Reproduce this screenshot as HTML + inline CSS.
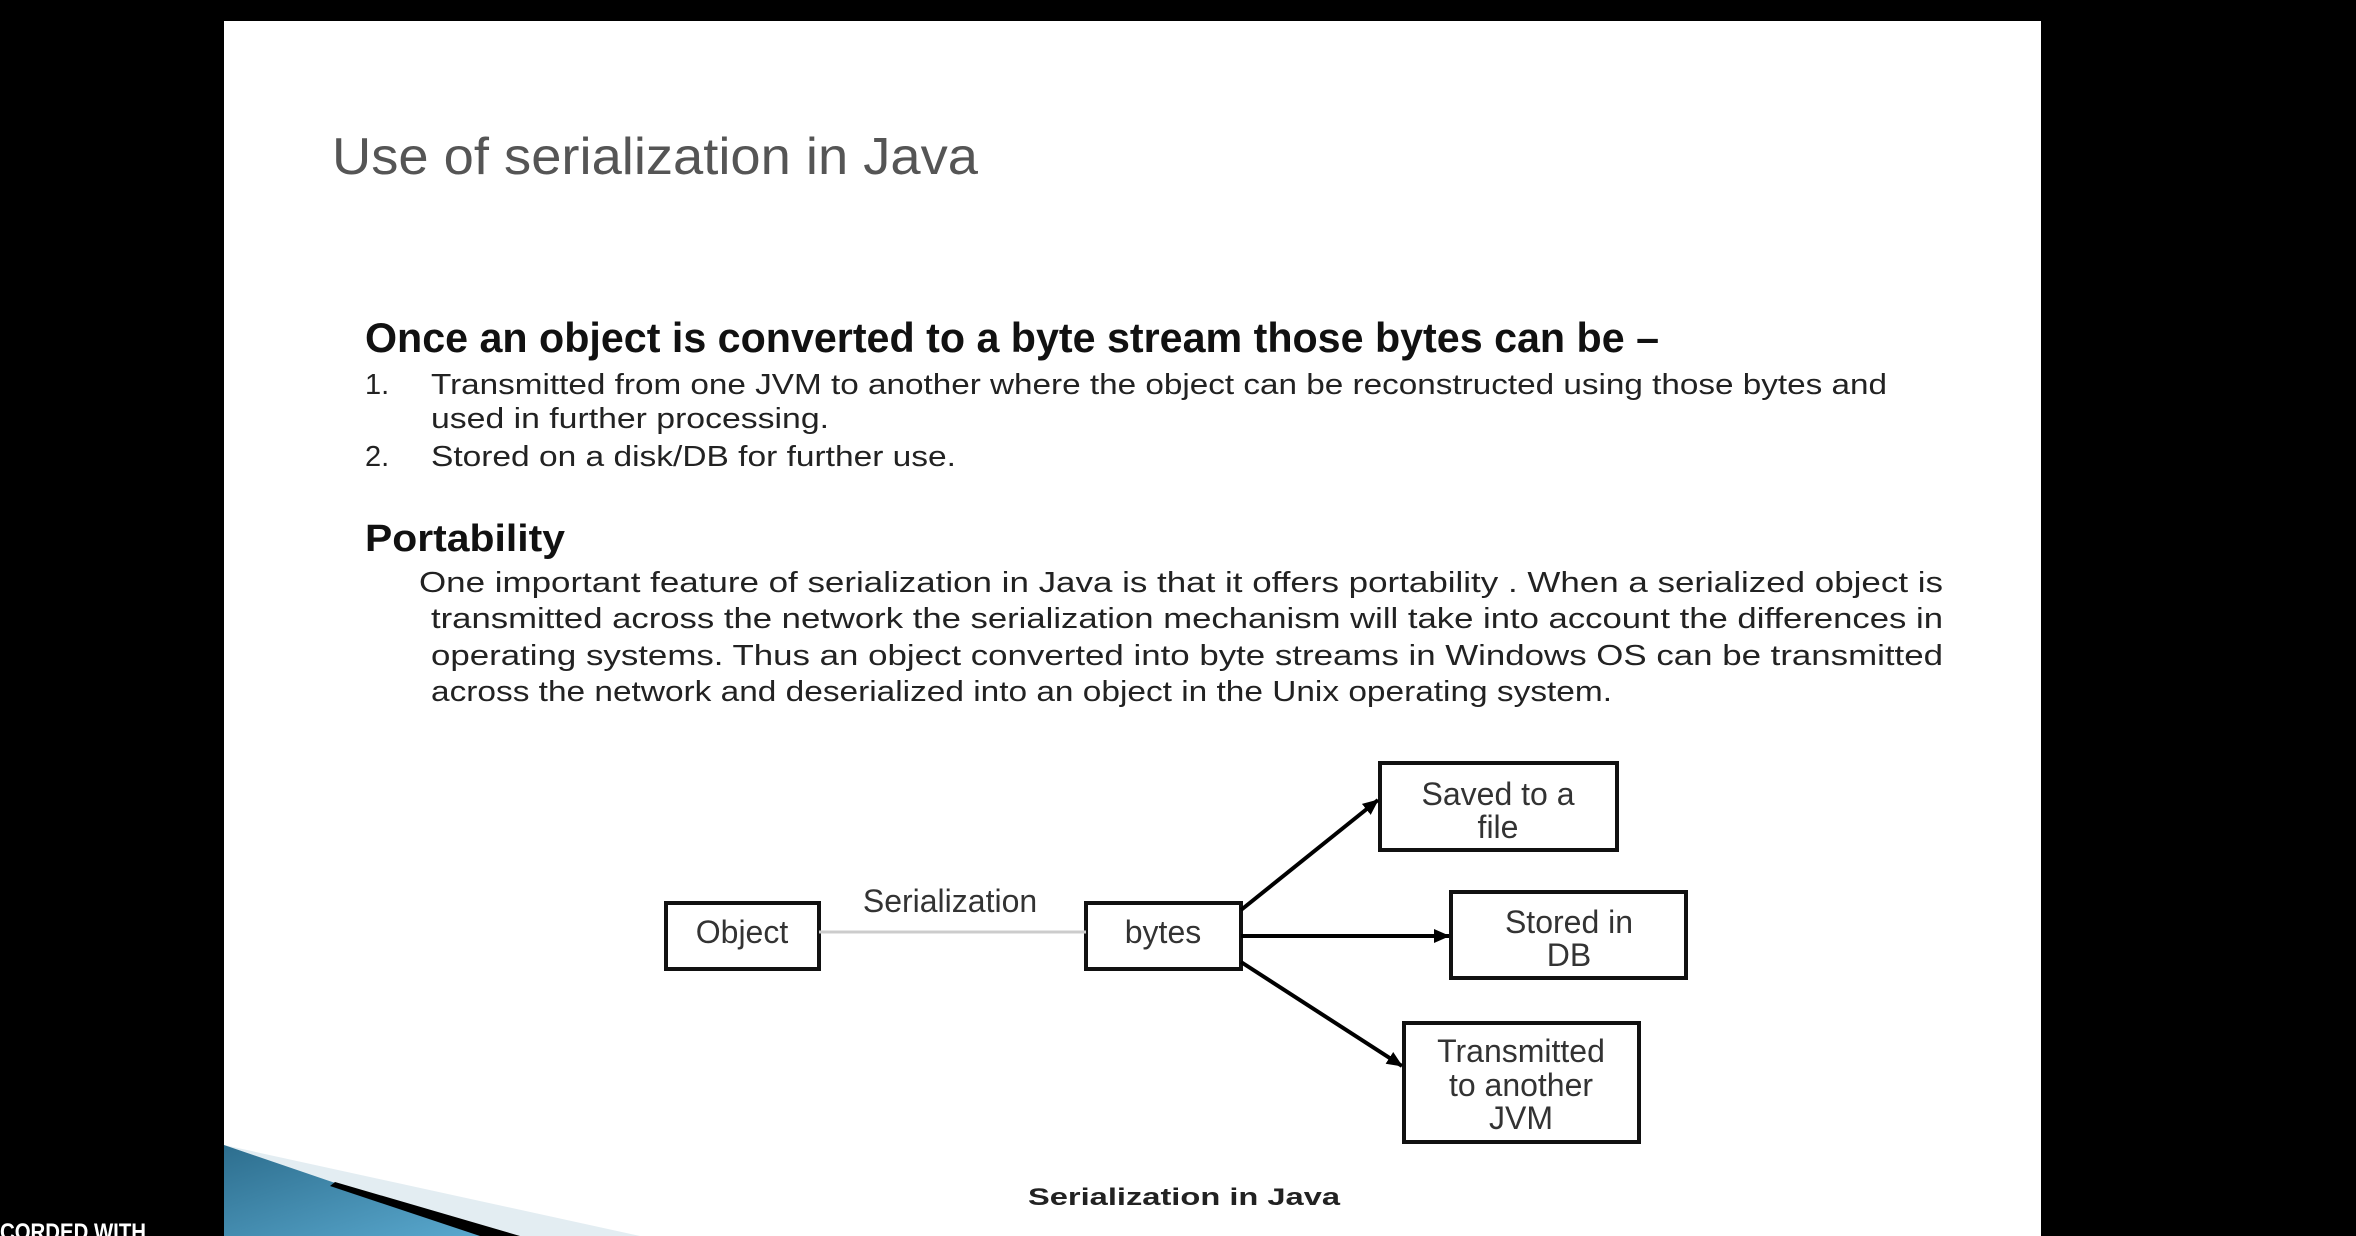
<!DOCTYPE html>
<html><head><meta charset="utf-8"><style>html,body{margin:0;padding:0;background:#000;}svg{display:block}</style></head>
<body>
<svg width="2356" height="1236" viewBox="0 0 2356 1236" xmlns="http://www.w3.org/2000/svg" font-family="Liberation Sans, sans-serif">
<rect width="2356" height="1236" fill="#000"/>
<rect x="224" y="21" width="1817" height="1215" fill="#fff"/>
<defs><linearGradient id="bl" x1="0" y1="0" x2="1" y2="1"><stop offset="0" stop-color="#2d6e8e"/><stop offset="1" stop-color="#5aa9cf"/></linearGradient>
<marker id="ah" markerWidth="16" markerHeight="14" refX="15" refY="7" orient="auto" markerUnits="userSpaceOnUse"><path d="M0,0 L16,7 L0,14 z" fill="#000"/></marker></defs>
<polygon points="224,1145 224,1236 640,1236" fill="#e3edf2"/>
<polygon points="224,1145 224,1236 490,1236" fill="url(#bl)"/>
<polygon points="330,1186 480,1236 520,1236 335,1182" fill="#000"/>
<text x="0" y="1240" fill="#fff" font-weight="bold" font-size="24" textLength="146" lengthAdjust="spacingAndGlyphs">CORDED WITH</text>

<text x="332" y="174" fill="#555" font-size="52" textLength="646" lengthAdjust="spacingAndGlyphs">Use of serialization in Java</text>

<g fill="#111">
<text x="365" y="352" font-size="42" font-weight="bold" textLength="1294" lengthAdjust="spacingAndGlyphs">Once an object is converted to a byte stream those bytes can be –</text>
<g font-size="29" fill="#222">
<text x="365" y="394">1.</text>
<text x="431" y="394" textLength="1456" lengthAdjust="spacingAndGlyphs">Transmitted from one JVM to another where the object can be reconstructed  using those bytes and</text>
<text x="431" y="428" textLength="398" lengthAdjust="spacingAndGlyphs">used in further processing.</text>
<text x="365" y="466">2.</text>
<text x="431" y="466" textLength="525" lengthAdjust="spacingAndGlyphs">Stored on a disk/DB for further use.</text>
</g>
<text x="365" y="551" font-size="38" font-weight="bold" textLength="200" lengthAdjust="spacingAndGlyphs">Portability</text>
<g font-size="29" fill="#222">
<text x="419" y="592" textLength="1524" lengthAdjust="spacingAndGlyphs">One important feature of serialization in Java is that  it offers portability . When a serialized object is</text>
<text x="431" y="628" textLength="1512" lengthAdjust="spacingAndGlyphs">transmitted across the network the serialization mechanism will take into account the differences in</text>
<text x="431" y="665" textLength="1512" lengthAdjust="spacingAndGlyphs">operating systems. Thus an object converted into byte streams in Windows OS can be transmitted</text>
<text x="431" y="701" textLength="1181" lengthAdjust="spacingAndGlyphs">across the network and deserialized into an object in the Unix operating system.</text>
</g>
</g>

<g fill="none" stroke="#111" stroke-width="4">
<rect x="666" y="903" width="153" height="66"/>
<rect x="1086" y="903" width="155" height="66"/>
<rect x="1380" y="763" width="237" height="87"/>
<rect x="1451" y="892" width="235" height="86"/>
<rect x="1404" y="1023" width="235" height="119"/>
</g>
<line x1="819" y1="932" x2="1086" y2="932" stroke="#ccc" stroke-width="3"/>
<g stroke="#000" stroke-width="4" marker-end="url(#ah)">
<line x1="1241" y1="910" x2="1378" y2="800"/>
<line x1="1241" y1="936" x2="1449" y2="936"/>
<line x1="1241" y1="962" x2="1402" y2="1066"/>
</g>
<g fill="#333" font-size="32" text-anchor="middle">
<text x="742" y="943">Object</text>
<text x="950" y="912">Serialization</text>
<text x="1163" y="943">bytes</text>
<text x="1498" y="805">Saved to a</text>
<text x="1498" y="838">file</text>
<text x="1569" y="933">Stored in</text>
<text x="1569" y="966">DB</text>
<text x="1521" y="1062">Transmitted</text>
<text x="1521" y="1096">to another</text>
<text x="1521" y="1129">JVM</text>
</g>
<text x="1028" y="1205" fill="#222" font-size="24" font-weight="bold" textLength="312" lengthAdjust="spacingAndGlyphs">Serialization in Java</text>
</svg>
</body></html>
